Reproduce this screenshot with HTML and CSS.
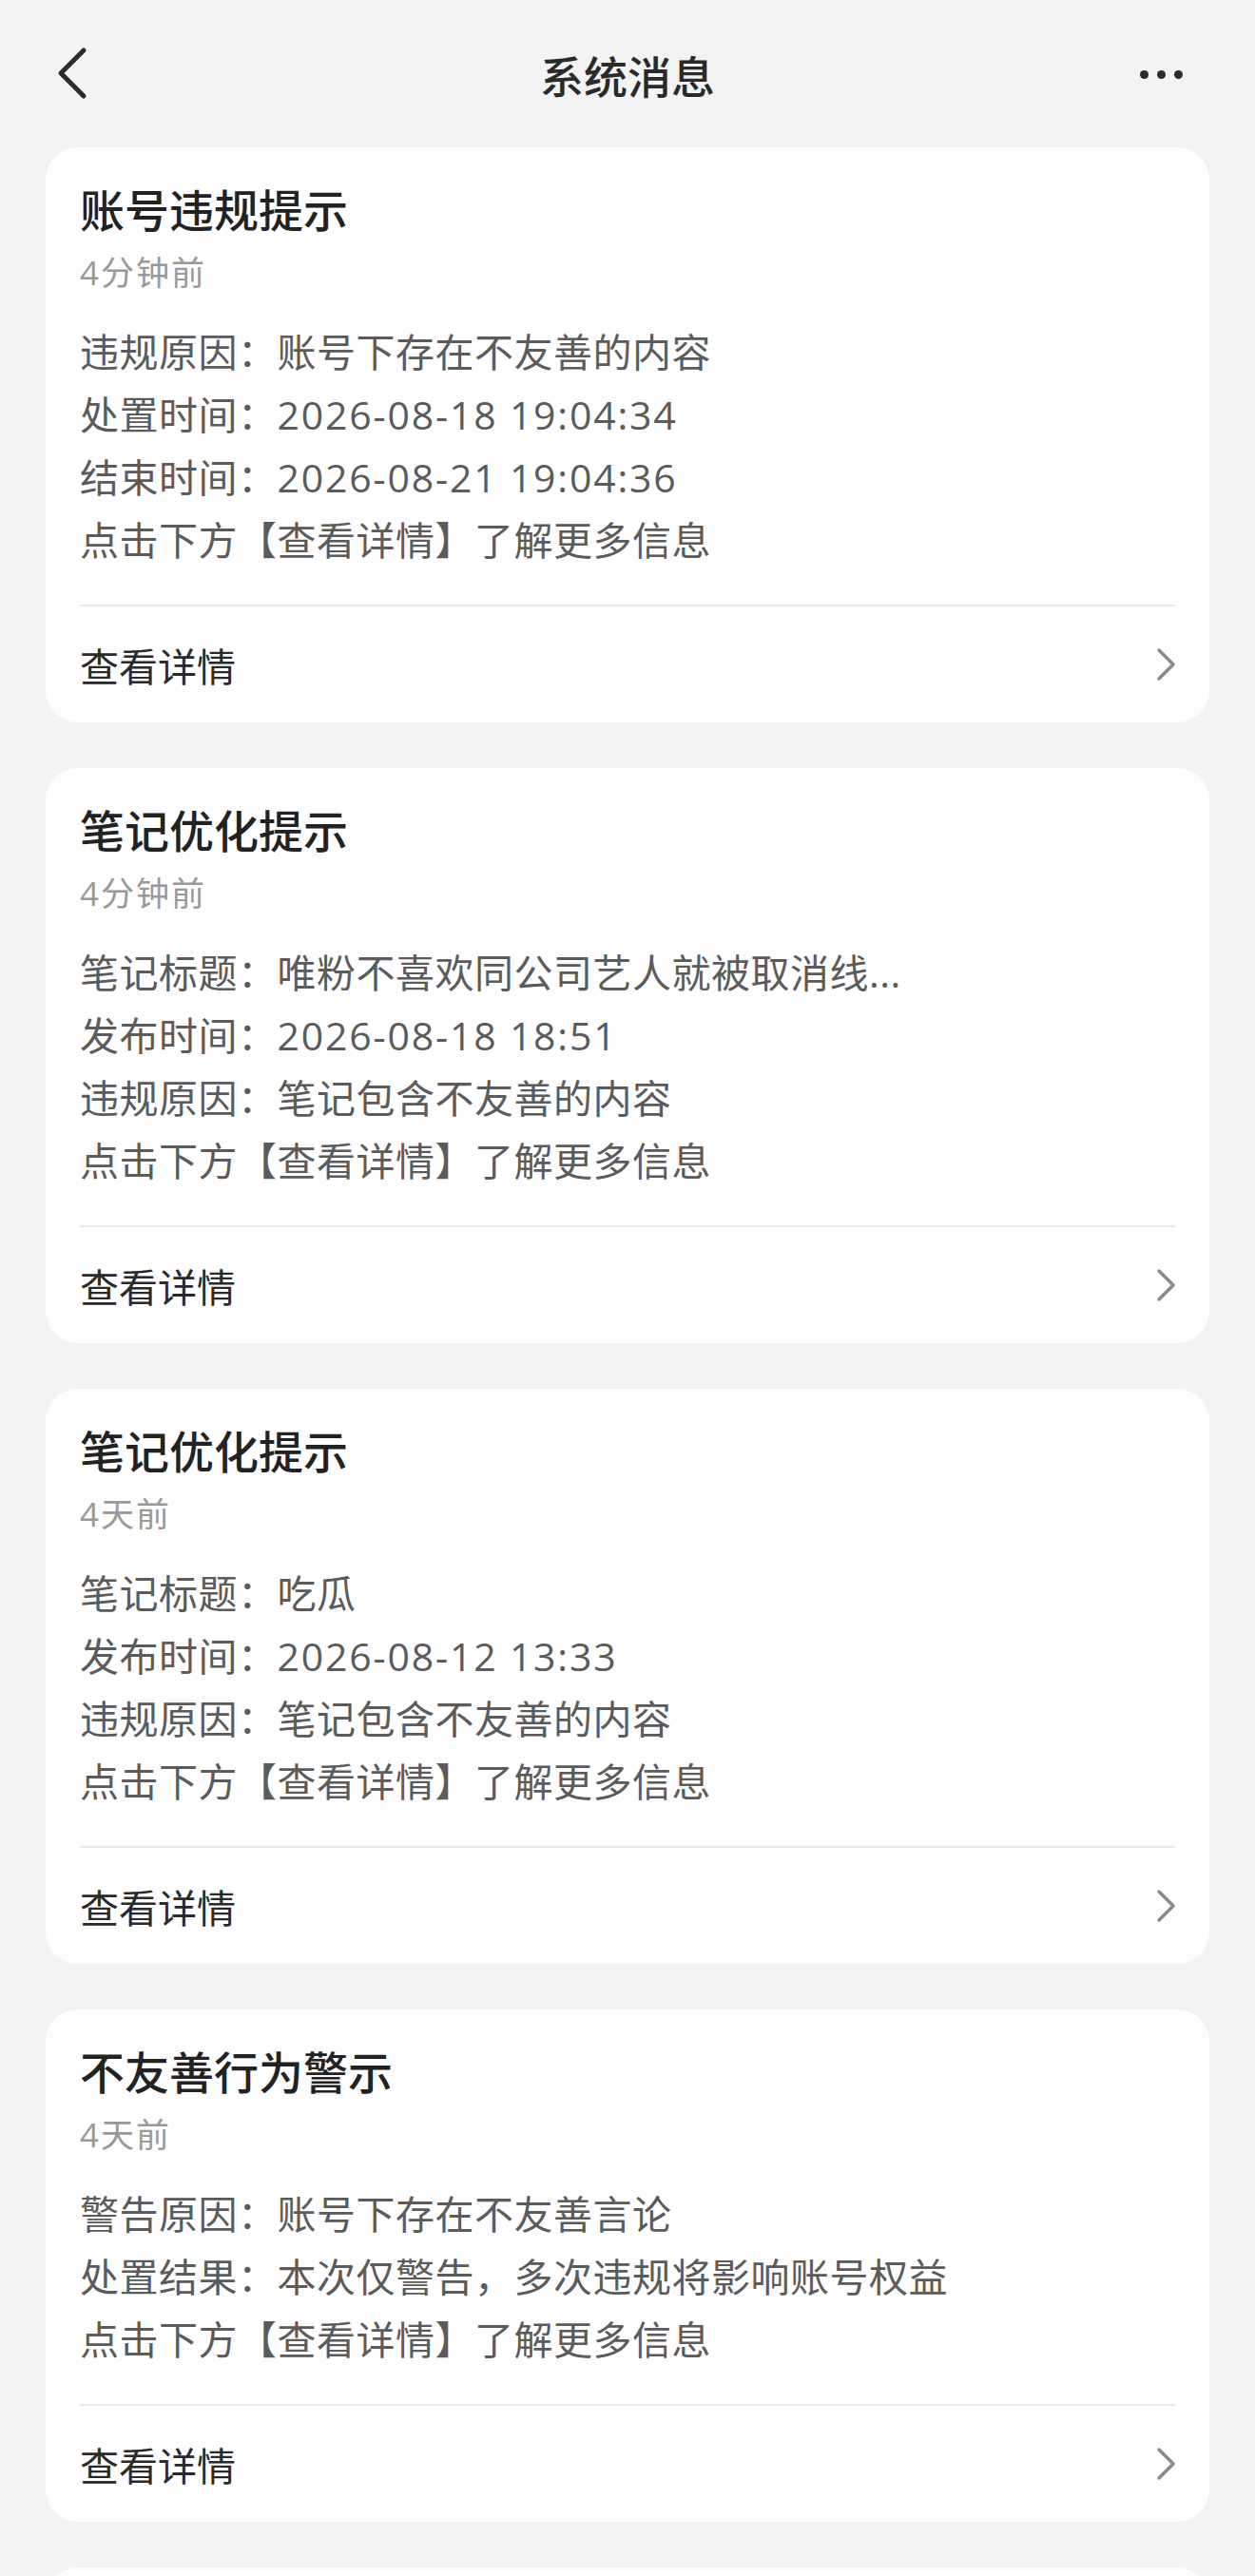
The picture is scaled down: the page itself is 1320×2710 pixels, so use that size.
FILE: index.html
```html
<!DOCTYPE html>
<html lang="zh-CN">
<head>
    <meta charset="UTF-8">
    <meta name="viewport" content="width=device-width, initial-scale=1.0">
    <title>系统消息</title>
    <link rel="stylesheet" href="styles.css">
</head>
<body>
    <div class="top-bar">
        <svg class="back-icon" width="40" height="60" viewBox="0 0 40 60">
            <path d="M30 4 L6 28 L30 52" fill="none" stroke="#2b2b2b" stroke-width="5" stroke-linecap="round" stroke-linejoin="round"/>
        </svg>
        <h1 class="page-title">系统消息</h1>
        <div class="more-dots">
            <span></span><span></span><span></span>
        </div>
    </div>

    <div class="message-list">
        <div class="message-card">
            <h2 class="card-title">账号违规提示</h2>
            <div class="card-time">4分钟前</div>
            <div class="card-body">
                <p>违规原因：账号下存在不友善的内容</p>
                <p>处置时间：<span class="num">2026-08-18 19:04:34</span></p>
                <p>结束时间：<span class="num">2026-08-21 19:04:36</span></p>
                <p>点击下方【查看详情】了解更多信息</p>
            </div>
            <div class="card-divider"></div>
            <div class="card-link">
                <span>查看详情</span>
                <svg class="arrow-icon" width="22" height="36" viewBox="0 0 22 36">
                    <path d="M3 3 L18 18 L3 33" fill="none" stroke="#8a8a8a" stroke-width="3.5" stroke-linecap="round" stroke-linejoin="round"/>
                </svg>
            </div>
        </div>

        <div class="message-card">
            <h2 class="card-title">笔记优化提示</h2>
            <div class="card-time">4分钟前</div>
            <div class="card-body">
                <p>笔记标题：唯粉不喜欢同公司艺人就被取消线...</p>
                <p>发布时间：<span class="num">2026-08-18 18:51</span></p>
                <p>违规原因：笔记包含不友善的内容</p>
                <p>点击下方【查看详情】了解更多信息</p>
            </div>
            <div class="card-divider"></div>
            <div class="card-link">
                <span>查看详情</span>
                <svg class="arrow-icon" width="22" height="36" viewBox="0 0 22 36">
                    <path d="M3 3 L18 18 L3 33" fill="none" stroke="#8a8a8a" stroke-width="3.5" stroke-linecap="round" stroke-linejoin="round"/>
                </svg>
            </div>
        </div>

        <div class="message-card">
            <h2 class="card-title">笔记优化提示</h2>
            <div class="card-time">4天前</div>
            <div class="card-body">
                <p>笔记标题：吃瓜</p>
                <p>发布时间：<span class="num">2026-08-12 13:33</span></p>
                <p>违规原因：笔记包含不友善的内容</p>
                <p>点击下方【查看详情】了解更多信息</p>
            </div>
            <div class="card-divider"></div>
            <div class="card-link">
                <span>查看详情</span>
                <svg class="arrow-icon" width="22" height="36" viewBox="0 0 22 36">
                    <path d="M3 3 L18 18 L3 33" fill="none" stroke="#8a8a8a" stroke-width="3.5" stroke-linecap="round" stroke-linejoin="round"/>
                </svg>
            </div>
        </div>

        <div class="message-card">
            <h2 class="card-title">不友善行为警示</h2>
            <div class="card-time">4天前</div>
            <div class="card-body">
                <p>警告原因：账号下存在不友善言论</p>
                <p>处置结果：本次仅警告，多次违规将影响账号权益</p>
                <p>点击下方【查看详情】了解更多信息</p>
            </div>
            <div class="card-divider"></div>
            <div class="card-link">
                <span>查看详情</span>
                <svg class="arrow-icon" width="22" height="36" viewBox="0 0 22 36">
                    <path d="M3 3 L18 18 L3 33" fill="none" stroke="#8a8a8a" stroke-width="3.5" stroke-linecap="round" stroke-linejoin="round"/>
                </svg>
            </div>
        </div>

        <!-- next card, only its top edge is in view -->
        <div class="message-card card-peek"></div>
    </div>
</body>
</html>
```

FILE: styles.css
```css
/* Basic page */
body {
    margin: 0;
    background-color: #f3f3f3;
    font-family: "Open Sans", "Noto Sans CJK SC", sans-serif;
    color: #222;
}

/* Top navigation bar */
.top-bar {
    height: 155px;
    display: grid;
    grid-template-columns: 1fr auto 1fr;
    align-items: center;
    padding: 0 64px;
}
.back-icon {
    display: block;
    margin-top: 2px;
    margin-left: -6px;
}
.page-title {
    margin: 0;
    font-size: 46px;
    font-weight: 500;
    color: #2a2a2a;
}
.more-dots {
    justify-self: end;
    display: flex;
    gap: 9px;
    margin-right: 12px;
    margin-top: 2px;
}
.more-dots span {
    width: 9px;
    height: 9px;
    border-radius: 50%;
    background-color: #2b2b2b;
}

/* Message cards */
.message-list {
    display: flex;
    flex-direction: column;
    gap: 48px;
    padding: 0 48px;
}
.message-card {
    background-color: #fefefe;
    border-radius: 34px;
    padding: 36px 36px 0;
}
.card-peek {
    padding: 0;
    height: 40px;
    border-radius: 34px 34px 0 0;
}
.card-title {
    margin: 0;
    font-size: 47px;
    line-height: 60px;
    font-weight: 500;
    color: #222;
}
.card-time {
    margin-top: 12px;
    font-size: 35px;
    line-height: 48px;
    letter-spacing: 2px;
    color: #999;
}
.card-body {
    margin-top: 26px;
}
.card-body p {
    margin: 0;
    font-size: 41px;
    line-height: 66px;
    letter-spacing: 0.5px;
    color: #5b5b5b;
    white-space: nowrap;
}
.card-body .num {
    letter-spacing: 1.8px;
}
.card-divider {
    margin-top: 35px;
    height: 2px;
    background-color: #e8e8e8;
}
.card-link {
    height: 122px;
    display: flex;
    align-items: center;
    justify-content: space-between;
    font-size: 41px;
    color: #2a2a2a;
}
.arrow-icon {
    display: block;
    margin-right: -2px;
}
```
